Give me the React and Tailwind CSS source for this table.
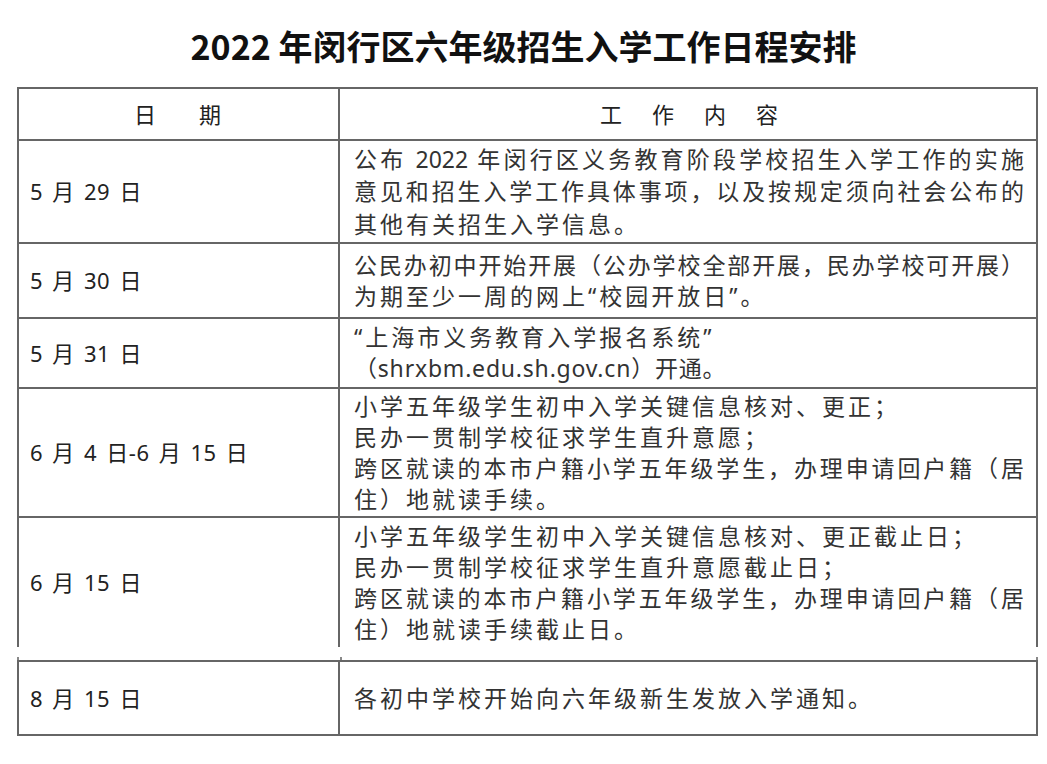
import React from "react";

const body = "font-['Noto_Sans','Noto_Sans_CJK_SC',sans-serif]";

function Line({ text, full, track }) {
  return full ? (
    <div className="whitespace-nowrap text-justify [text-align-last:justify] tracking-normal">{text}</div>
  ) : (
    <div className={`whitespace-nowrap ${track || "tracking-[3px]"}`}>{text}</div>
  );
}

function Row({ date, lines, h, border = true, leading = "leading-[31px]" }) {
  return (
    <div className={`grid grid-cols-[319px_1fr] ${h} ${border ? "border-b-2 border-[#666]" : ""}`}>
      <div className="flex items-center pl-[11px] text-[22px] text-[#222] tracking-[0.5px] [word-spacing:3px]">{date}</div>
      <div className={`flex flex-col justify-center border-l-2 border-[#666] pl-[14px] pr-[12px] text-[23px] text-[#333] ${leading}`}>
        {lines.map((l, i) => (
          <Line key={i} text={l.t} full={l.f} track={l.k} />
        ))}
      </div>
    </div>
  );
}

export default function App() {
  return (
    <div className={`w-[1047px] h-[764px] bg-white ${body}`}>
      <div className="pt-[26px] h-[66px] text-center text-[34px] leading-[40px] font-bold text-[#111] font-['Noto_Sans_CJK_SC',sans-serif]">
        2022 年闵行区六年级招生入学工作日程安排
      </div>
      <div className="mt-[21px] ml-[17px] w-[1021px] border-t-2 border-l-2 border-r-2 border-[#666]">
        <div className="grid grid-cols-[319px_1fr] h-[52px] border-b-2 border-[#666] text-[22px] text-[#222]">
          <div className="flex items-center justify-center gap-[43px] pr-[2px]">
            <span>日</span>
            <span>期</span>
          </div>
          <div className="flex items-center justify-center gap-[30px] border-l-2 border-[#666] pl-[2px]">
            <span>工</span>
            <span>作</span>
            <span>内</span>
            <span>容</span>
          </div>
        </div>
        <Row
          h="h-[103px]"
          leading="leading-[32.5px]"
          date="5 月 29 日"
          lines={[
            { t: "公布 2022 年闵行区义务教育阶段学校招生入学工作的实施", f: true },
            { t: "意见和招生入学工作具体事项，以及按规定须向社会公布的", f: true },
            { t: "其他有关招生入学信息。" },
          ]}
        />
        <Row
          h="h-[75px]"
          date="5 月 30 日"
          lines={[
            { t: "公民办初中开始开展（公办学校全部开展，民办学校可开展）", f: true },
            { t: "为期至少一周的网上“校园开放日”。" },
          ]}
        />
        <Row
          h="h-[70px]"
          date="5 月 31 日"
          lines={[
            { t: "“上海市义务教育入学报名系统”" },
            { t: "（shrxbm.edu.sh.gov.cn）开通。", k: "tracking-[0.8px]" },
          ]}
        />
        <Row
          h="h-[129px]"
          date="6 月 4 日-6 月 15 日"
          lines={[
            { t: "小学五年级学生初中入学关键信息核对、更正；" },
            { t: "民办一贯制学校征求学生直升意愿；" },
            { t: "跨区就读的本市户籍小学五年级学生，办理申请回户籍（居", f: true },
            { t: "住）地就读手续。" },
          ]}
        />
        <Row
          h="h-[129px]"
          border={false}
          date="6 月 15 日"
          lines={[
            { t: "小学五年级学生初中入学关键信息核对、更正截止日；" },
            { t: "民办一贯制学校征求学生直升意愿截止日；" },
            { t: "跨区就读的本市户籍小学五年级学生，办理申请回户籍（居", f: true },
            { t: "住）地就读手续截止日。" },
          ]}
        />
      </div>
      <div className="h-[10px]" />
      <div className="ml-[17px] w-[1021px] h-[3px] grid grid-cols-[321px_1fr] border-l-2 border-r-2 border-[#888]">
        <div />
        <div className="border-l-2 border-[#888]" />
      </div>
      <div className="ml-[17px] w-[1021px] border-2 border-[#666]">
        <Row h="h-[72px]" border={false} date="8 月 15 日" lines={[{ t: "各初中学校开始向六年级新生发放入学通知。" }]} />
      </div>
    </div>
  );
}
